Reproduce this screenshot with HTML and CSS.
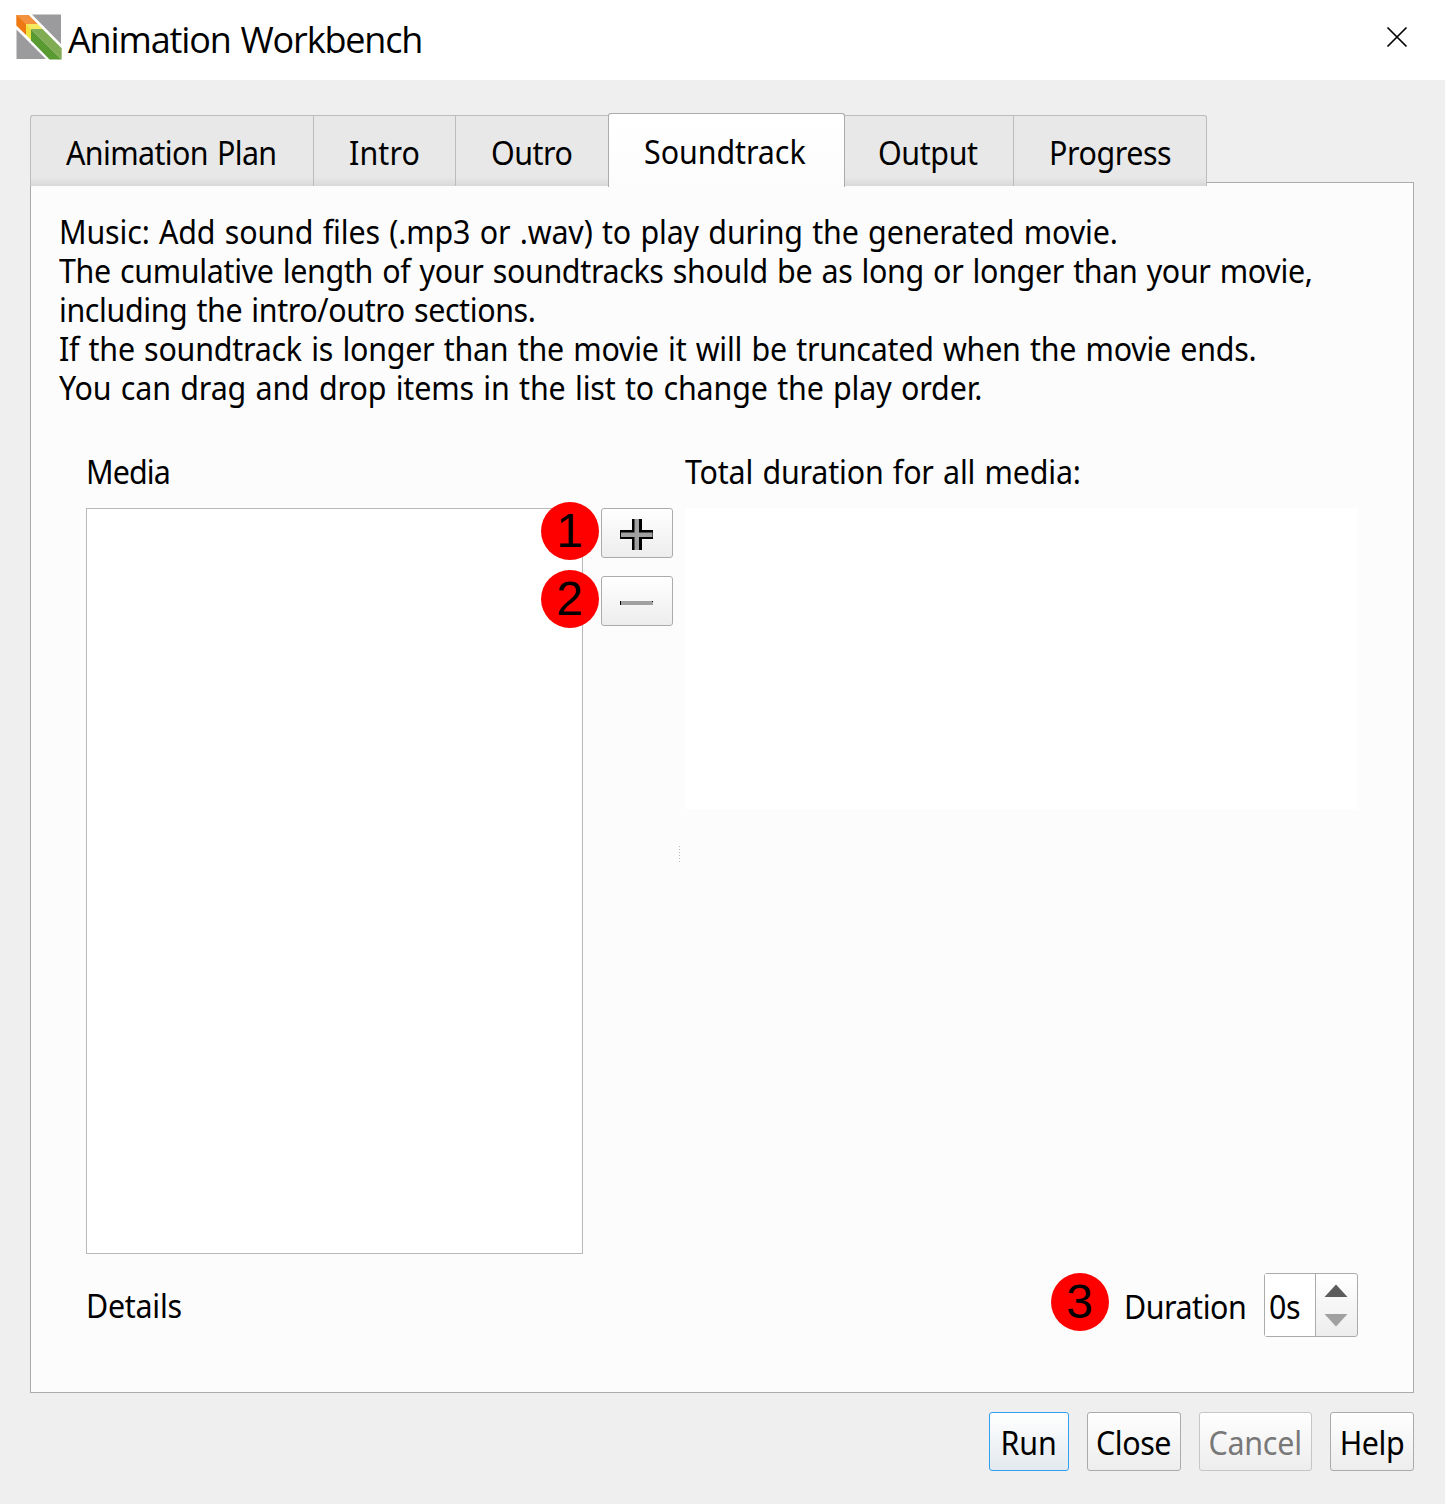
FILE: index.html
```html
<!DOCTYPE html>
<html lang="en">
<head>
<meta charset="utf-8">
<title>Animation Workbench</title>
<link rel="stylesheet" href="styles.css">
</head>
<body>
<div class="window">
  <header class="titlebar">
    <svg class="logo" viewBox="0 0 46 46">
      <path fill="#9b9b9d" d="M16 .5H45V30Z"/>
      <path fill="#9b9b9d" d="M.500 15.500V45H30Z"/>
      <path fill="#ee7913" d="M.3 1H12.500L22 10.500H10V21L.3 11.500Z"/>
      <path fill="#f2923f" d="M.3 1H12.500L21.500 10H9.500Z"/>
      <path fill="#f0e13c" d="M10 10H21.500L26.500 15H15V26L10 21Z"/>
      <path fill="#f5e962" d="M10 10H21.500L26.500 15H15Z"/>
      <path fill="#5a9a32" d="M15 15L45.700 45.500H33.500L15 26.500Z"/>
      <path fill="#80ad53" d="M15 15H26.500L45.700 34.200V45.500Z"/>
    </svg>
    <h1 class="title"><span class="t-title">Animation Workbench</span></h1>
    <svg class="close" viewBox="0 0 20 20"><path d="M0.5 0.5L19.5 19.5M19.5 0.5L0.5 19.5"/></svg>
  </header>
  <main class="body">
    <nav class="tabs">
      <div class="tab"><span class="label t-plan">Animation Plan</span></div>
      <div class="tab"><span class="label t-intro">Intro</span></div>
      <div class="tab"><span class="label t-outro">Outro</span></div>
      <div class="tab active"><span class="label t-sound">Soundtrack</span></div>
      <div class="tab"><span class="label t-output">Output</span></div>
      <div class="tab last"><span class="label t-progress">Progress</span></div>
    </nav>
    <section class="page">
      <div class="intro">
        <span class="label t-l1">Music: Add sound files (.mp3 or .wav) to play during the generated movie.</span>
        <span class="label t-l2">The cumulative length of your soundtracks should be as long or longer than your movie,</span>
        <span class="label t-l3">including the intro/outro sections.</span>
        <span class="label t-l4">If the soundtrack is longer than the movie it will be truncated when the movie ends.</span>
        <span class="label t-l5">You can drag and drop items in the list to change the play order.</span>
      </div>
      <div class="labels"><span class="label t-media">Media</span><span class="label t-total">Total duration for all media:</span></div>
      <div class="panes">
        <div class="list"></div>
        <div class="tools">
          <div class="tool"><b class="badge">1</b>
            <svg class="icon" viewBox="0 0 34 32"><path fill="#000" d="M12 0H22V11H33V20H22V31H12V20H0V11H12Z"/><path fill="#a0a0a0" d="M14.500 0H19V13.500H32.500V18H19V31H14.500V18H1V13.500H14.500Z"/></svg></div>
          <div class="tool"><b class="badge">2</b>
            <svg class="icon" viewBox="0 0 34 32"><path fill="#a0a0a0" d="M0 14H33V18H0Z"/><path fill="#000" d="M0 14H1V18H0ZM32 14H33V15H32Z"/></svg></div>
        </div>
        <div class="grip"></div>
        <div class="preview"></div>
      </div>
      <div class="details">
        <span class="label t-details">Details</span>
        <div class="duration">
          <b class="badge third">3</b>
          <span class="label t-duration">Duration</span>
          <div class="spin"><div class="value"><span class="label t-value">0s</span></div>
            <svg class="arrows" viewBox="0 0 41 62"><path fill="#5c5c5c" d="M8.500 23L20 10.500L31.500 23Z"/><path fill="#a0a0a0" d="M8.500 40L20 52.500L31.500 40Z"/></svg></div>
        </div>
      </div>
    </section>
    <footer class="actions">
      <button class="btn run"><span class="label t-run">Run</span></button>
      <button class="btn shut"><span class="label t-close">Close</span></button>
      <button class="btn cancel"><span class="label t-cancel">Cancel</span></button>
      <button class="btn help"><span class="label t-help">Help</span></button>
    </footer>
  </main>
</div>
</body>
</html>
```
FILE: styles.css
```css
* { box-sizing: border-box; }
body { margin: 0; background: #fff; color: #000; font: 32px/39px "Noto Sans", sans-serif; word-spacing: 1.7px; }
.window { width: 1445px; height: 1504px; }
span { white-space: nowrap; }
svg { display: block; flex: none; }
.titlebar { height: 80px; display: flex; align-items: flex-start; background: #fff; }
.logo { width: 46px; height: 46px; margin: 14px 0 0 16px; }
.title { margin: 15px auto 0 6px; font: 400 36px/50px "Open Sans", sans-serif; }
.close { width: 20px; height: 20px; margin: 27px 38px 0 0; overflow: visible; }
.close path { stroke: #000; stroke-width: 1.7; fill: none; }
.body { height: 1424px; padding: 33px 31px 0 30px; background: #efefef; }
.tabs { display: grid; grid-template-columns: 283px 142px 153px 237px 168px 194px; align-items: end; height: 74px; margin-bottom: -5px; position: relative; }
.tab { height: 71px; margin-bottom: 1px; border: 1px solid #bcbcbc; border-width: 1px 0 0 1px; background: linear-gradient(#e8e8e8 0 61px, #d8d8d8); padding: 17px 0 0 35px; }
.tab:first-child { border-top-left-radius: 3px; }
.tab.last { border-right-width: 1px; border-top-right-radius: 3px; }
.tab.active { height: 74px; margin: 0; border: 1px solid #ababab; border-bottom: 0; border-radius: 3px 3px 0 0; background: linear-gradient(#fff, #fcfcfc); padding-top: 18px; }
.tab.active + .tab { border-left: 0; padding-left: 33px; }
.page { height: 1211px; border: 1px solid #ababab; background: #fcfcfc; padding: 29px 55px 0; }
.intro { margin: 0 0 0 -27px; display: flex; flex-direction: column; align-items: flex-start; }
.labels { display: grid; grid-template-columns: 599px 1fr; margin-top: 45px; }
.panes { display: flex; height: 746px; margin-top: 17px; }
.list { width: 497px; border: 1px solid #b9b9b9; background: #fff; }
.tools { margin-left: 18px; width: 72px; display: flex; flex-direction: column; gap: 18px; }
.tool { position: relative; height: 50px; border: 1px solid #ababab; border-radius: 3px; background: linear-gradient(#fff, #ededed); padding: 10px 0 0 18px; }
.icon { width: 34px; height: 32px; }
.badge { position: absolute; left: -61px; top: -7px; width: 58px; height: 58px; border-radius: 50%; background: #f00; font: 48px/58px "Liberation Sans", sans-serif; text-align: center; text-indent: -1px; }
.badge.third { position: static; margin: 0 15px 0 0; }
.grip { width: 1px; height: 17px; margin: 338px 5px 0 6px; background: repeating-linear-gradient(#bbb 0 1px, transparent 1px 3px); }
.preview { width: 673px; height: 301px; background: #fff; }
.details { display: flex; justify-content: space-between; align-items: flex-start; margin-top: 19px; }
.duration { display: flex; }
.spin { margin-left: 19px; width: 94px; height: 64px; display: flex; border: 1px solid #ababab; border-radius: 3px; background: linear-gradient(#fff, #ededed); }
.value { width: 51px; padding: 13px 0 0 4px; background: #fff; border-right: 1px solid #ababab; flex: none; }
.arrows { width: 41px; height: 62px; }
.actions { display: flex; justify-content: flex-end; gap: 18px; margin-top: 19px; }
.btn { display: flex; justify-content: center; height: 59px; padding: 10px 0 0; border: 1px solid #ababab; border-radius: 3px; background: linear-gradient(#fff, #ededed); font: inherit; color: #000; }
.run { width: 80px; border-color: #30a0f0; background: linear-gradient(#fff, #e3e9ee); }
.shut { width: 94px; }
.cancel { width: 113px; color: #787878; border-color: #c6c6c6; }
.help { width: 84px; }

/* Slightly condensed interface lettering, tracked per label */
.label { display: block; width: max-content; transform: scaleX(.95); transform-origin: 0 50%; }
.btn .label { transform-origin: 50% 50%; flex: none; }
.t-title { letter-spacing: -1.15px; }
.t-plan { letter-spacing: -.65px; }
.t-intro { letter-spacing: .12px; }
.t-outro { letter-spacing: -.5px; }
.t-sound { letter-spacing: -.06px; }
.t-output { letter-spacing: -.4px; }
.t-progress { letter-spacing: -.45px; }
.t-l1 { letter-spacing: -.15px; }
.t-l2 { letter-spacing: -.35px; }
.t-l3 { letter-spacing: -.41px; }
.t-l4 { letter-spacing: -.24px; }
.t-l5 { letter-spacing: -.14px; }
.t-media { letter-spacing: -.9px; }
.t-total { letter-spacing: -.19px; }
.t-details { letter-spacing: -.27px; margin-top: 13px; }
.label.t-duration { letter-spacing: -.49px; margin-top: 14px; width: 121px; }
.t-value { letter-spacing: -.4px; }
.t-run { letter-spacing: -.1px; }
.t-close { letter-spacing: -.44px; }
.t-cancel { letter-spacing: -.23px; }
.t-help { letter-spacing: -.4px; }
```
